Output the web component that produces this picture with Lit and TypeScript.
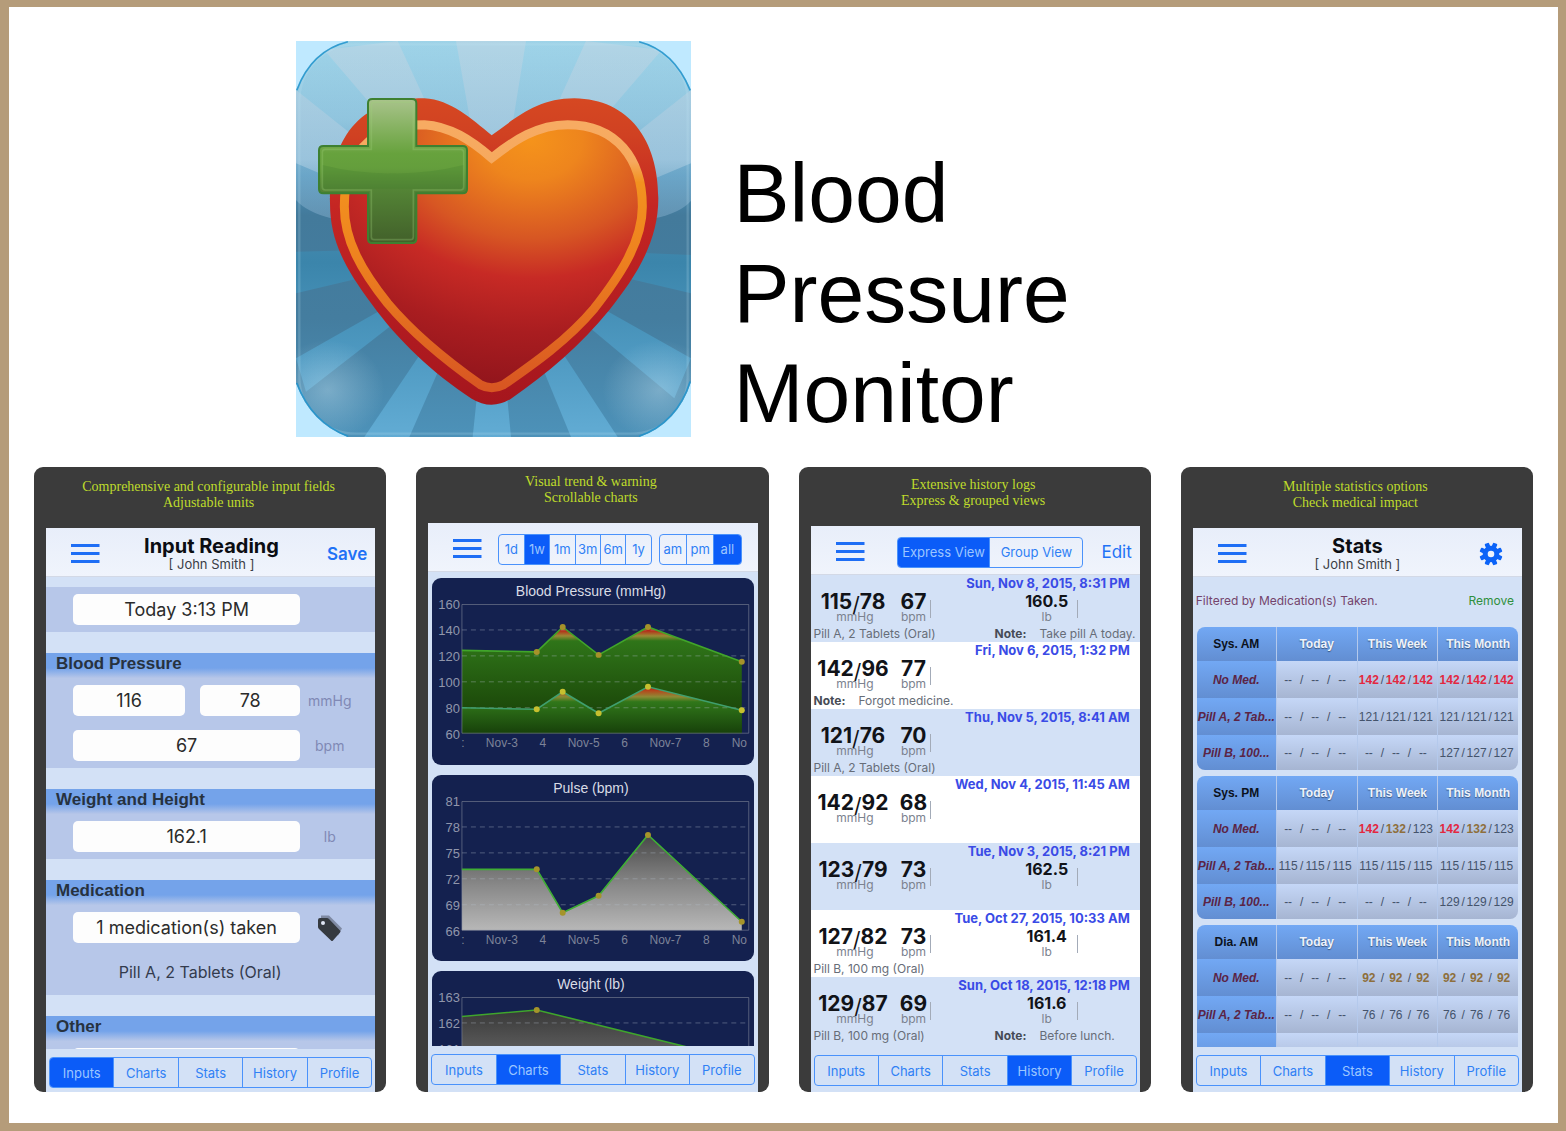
import { LitElement, html, svg, css, nothing } from "lit";
import { customElement, property } from "lit/decorators.js";
import { classMap } from "lit/directives/class-map.js";

const controls = css`
  * {
    box-sizing: border-box;
  }
  button {
    font: inherit;
    color: inherit;
    background: none;
    border: 0;
    padding: 0;
    margin: 0;
    cursor: pointer;
  }
`;

/* ---------- segmented control ---------- */

@customElement("segment-bar")
export class SegmentBar extends LitElement {
  @property({ attribute: false }) items: string[] = [];
  @property() selected = "";

  static styles = [
    controls,
    css`
      :host {
        display: block;
      }
      .bar {
        display: flex;
        height: 31px;
        border: 1px solid #4a92fb;
        border-radius: 4px;
        overflow: hidden;
        color: #2f80f5;
      }
      .item {
        flex: 1 1 0;
        min-width: 0;
        text-align: center;
        white-space: nowrap;
      }
      .item + .item {
        border-left: 1px solid #4a92fb;
      }
      .item.on {
        background: #0b5cf8;
        color: #9cc6ff;
      }
    `,
  ];

  render() {
    return html`<div class="bar" role="group">
      ${this.items.map(
        (item) => html`<button
          class=${classMap({ item: true, on: item === this.selected })}
          aria-pressed=${item === this.selected ? "true" : "false"}
        >
          ${item}
        </button>`,
      )}
    </div>`;
  }
}

/* ---------- phone frame ---------- */

@customElement("phone-frame")
export class PhoneFrame extends LitElement {
  @property({ attribute: false }) caption: string[] = [];
  @property() tab = "";

  static styles = [
    controls,
    css`
      :host {
        display: flex;
        flex-direction: column;
        min-width: 0;
        aspect-ratio: 352 / 625;
        padding: 0 11px 0 12px;
        border-radius: 9px;
        background: #3b3b3b;
        overflow: hidden;
      }
      .caption {
        margin: 0;
        padding: var(--caption-top, 12px) 4px 17px 0;
        font: 14px/16px "Liberation Serif", serif;
        color: #bfdc2b;
        text-align: center;
      }
      .line {
        display: block;
      }
      .screen {
        flex: 1;
        min-height: 0;
        display: flex;
        flex-direction: column;
        background: #d3e1f6;
      }
      .bar {
        flex: none;
        display: flex;
        align-items: center;
        height: 49px;
        padding: 4px 8px 0 25px;
        background: linear-gradient(#e8eefa, #f0f4fc);
        border-bottom: 1px solid #d3d9e6;
      }
      .menu {
        flex: none;
        width: 29px;
        height: 24px;
      }
      .menu svg {
        display: block;
      }
      .body {
        flex: 1;
        min-height: 0;
        overflow: hidden;
      }
      .tabs {
        flex: none;
        padding: 8px 3px var(--tabs-bottom, 6px);
        font-size: 13px;
      }
    `,
  ];

  render() {
    return html`
      <p class="caption">${this.caption.map((l) => html`<span class="line">${l}</span>`)}</p>
      <div class="screen">
        <header class="bar">
          <button class="menu" aria-label="Menu">
            <svg width="29" height="24" viewBox="0 0 29 24">
              <path d="M0 3.500h28.500M0 11.500h28.500M0 19.500h28.500" stroke="#1e6ef5" stroke-width="3.200" />
            </svg>
          </button>
          <slot name="bar"></slot>
        </header>
        <div class="body"><slot></slot></div>
        <nav class="tabs">
          <segment-bar
            .items=${["Inputs", "Charts", "Stats", "History", "Profile"]}
            selected=${this.tab}
          ></segment-bar>
        </nav>
      </div>
    `;
  }
}

/* ---------- app icon ---------- */

const RAYS = [
  "525,33 735,33",
  "130,60 350,33",
  "915,33 1142,60",
  "45,180 45,400",
  "1230,180 1230,400",
  "45,665 45,790",
  "1230,675 1230,790",
  "45,985 75,1085",
  "1230,985 1180,1105",
  "250,1221 385,1221",
  "870,1221 1010,1221",
  "575,1221 690,1221",
];

const HEART =
  "M632 316C700 268 765 205 880 205C1045 208 1132 330 1132 505C1132 640 1060 745 985 840C900 945 800 1030 690 1106Q632 1142 572 1106C455 1030 350 930 272 822C190 712 147 630 147 520C147 330 230 205 430 205C510 210 570 265 632 316Z";
const HEART_LINE =
  "M632 384C700 330 770 284 860 284C1005 284 1084 385 1084 530C1084 640 1010 745 940 835C860 930 760 1000 668 1064Q632 1082 598 1064C500 995 400 915 320 820C240 720 190 630 190 530C190 380 260 284 430 284C505 288 570 330 632 384Z";
const CROSS =
  "M274 207H393Q406 207 406 220V348H545Q558 348 558 361V477Q558 490 545 490H406V626Q406 639 393 639H274Q261 639 261 626V490H127Q114 490 114 477V361Q114 348 127 348H261V220Q261 207 274 207Z";
const CROSS_INNER =
  "M280 217H388Q397 217 397 226V358H539Q548 358 548 367V471Q548 480 539 480H397V620Q397 629 388 629H280Q271 629 271 620V480H133Q124 480 124 471V367Q124 358 133 358H271V226Q271 217 280 217Z";

@customElement("app-icon")
export class AppIcon extends LitElement {
  static styles = css`
    :host {
      display: block;
      background: #bfe9ff;
    }
    svg {
      display: block;
      width: 100%;
    }
  `;

  render() {
    return html`<svg viewBox="45 33 1185 1188" role="img" aria-label="Blood Pressure Monitor">
      <defs>
        <clipPath id="tile">
          <path
            d="M200 33H1075Q1180 60 1230 180V1055Q1190 1180 1075 1221H200Q90 1180 45 1060V180Q90 60 200 33Z"
          />
        </clipPath>
        <linearGradient id="sky" gradientUnits="userSpaceOnUse" x1="0" y1="33" x2="0" y2="1221">
          <stop offset="0" stop-color="#8ccbe4" />
          <stop offset=".2" stop-color="#7bbad7" />
          <stop offset=".34" stop-color="#4c92b9" />
          <stop offset=".44" stop-color="#437a9b" />
          <stop offset=".7" stop-color="#447d9f" />
          <stop offset="1" stop-color="#4d92b9" />
        </linearGradient>
        <linearGradient id="ray" gradientUnits="userSpaceOnUse" x1="0" y1="33" x2="0" y2="1221">
          <stop offset="0" stop-color="#a3cde1" />
          <stop offset=".3" stop-color="#8ab9d4" />
          <stop offset=".42" stop-color="#4c8bae" />
          <stop offset=".56" stop-color="#3b85ab" />
          <stop offset=".8" stop-color="#4f9ac2" />
          <stop offset="1" stop-color="#62acd4" />
        </linearGradient>
        <linearGradient id="gloss" x1="0" y1="0" x2="0" y2="1">
          <stop offset="0" stop-color="#fff" stop-opacity=".16" />
          <stop offset="1" stop-color="#a9cfee" stop-opacity=".3" />
        </linearGradient>
        <radialGradient id="glow">
          <stop offset="0" stop-color="#d5ecf7" stop-opacity=".35" />
          <stop offset="1" stop-color="#d5ecf7" stop-opacity="0" />
        </radialGradient>
        <linearGradient id="rim" x1="0" y1="0" x2="0" y2="1">
          <stop offset="0" stop-color="#d64822" />
          <stop offset=".12" stop-color="#d04122" />
          <stop offset=".35" stop-color="#c52623" />
          <stop offset=".8" stop-color="#ae1a20" />
          <stop offset="1" stop-color="#a5161d" />
        </linearGradient>
        <linearGradient id="line" x1="0" y1="0" x2="0" y2="1">
          <stop offset="0" stop-color="#f7ab62" />
          <stop offset=".14" stop-color="#f6a95e" />
          <stop offset=".22" stop-color="#f2921f" />
          <stop offset=".5" stop-color="#ee821f" />
          <stop offset="1" stop-color="#d85622" />
        </linearGradient>
        <radialGradient
          id="fill"
          gradientUnits="userSpaceOnUse"
          cx="0"
          cy="0"
          r="1"
          gradientTransform="translate(750 330) scale(960 740)"
        >
          <stop offset="0" stop-color="#f5931b" />
          <stop offset=".16" stop-color="#ee851d" />
          <stop offset=".4" stop-color="#d75623" />
          <stop offset=".56" stop-color="#c72a25" />
          <stop offset=".78" stop-color="#a91d20" />
          <stop offset="1" stop-color="#92151c" />
        </radialGradient>
        <linearGradient id="green" x1="0" y1="0" x2="0" y2="1">
          <stop offset="0" stop-color="#a9c38c" />
          <stop offset=".2" stop-color="#86b261" />
          <stop offset=".38" stop-color="#67a23d" />
          <stop offset=".48" stop-color="#649e3c" />
          <stop offset=".62" stop-color="#548536" />
          <stop offset="1" stop-color="#42602a" />
        </linearGradient>
      </defs>
      <g clip-path="url(#tile)">
        <rect x="45" y="33" width="1185" height="1188" fill="url(#sky)" />
        ${RAYS.map((r) => svg`<polygon points="${r} 635,650" fill="url(#ray)" />`)}
        <path d="M45 33H1230V512Q1200 548 1120 565Q900 610 632 610Q370 610 150 565Q75 545 45 510Z" fill="url(#gloss)" />
        <ellipse cx="140" cy="1080" rx="170" ry="150" fill="url(#glow)" />
        <ellipse cx="1135" cy="1080" rx="170" ry="150" fill="url(#glow)" />
        <rect x="55" y="43" width="1165" height="1168" rx="170" fill="none" stroke="#c4e6f5" stroke-opacity=".2" stroke-width="7" />
        <path
          d="M200 33Q90 60 45 180M1075 33Q1180 60 1230 180M1230 1055Q1190 1180 1075 1221M200 1221Q90 1180 45 1060"
          fill="none"
          stroke="#1f93cc"
          stroke-opacity=".85"
          stroke-width="10"
        />
      </g>
      <path d=${HEART} fill="url(#rim)" />
      <path d=${HEART_LINE} fill="url(#fill)" stroke="url(#line)" stroke-width="27" />
      <path d=${CROSS} fill="url(#green)" stroke="#3e8031" stroke-width="6" />
      <path d="M124 405Q230 432 335 430Q440 432 548 405V476H124Z" fill="#3f7a2c" fill-opacity=".25" />
      <path d=${CROSS_INNER} fill="none" stroke="#9fd07a" stroke-opacity=".3" stroke-width="5" />
    </svg>`;
  }
}

/* ---------- charts ---------- */

type Pt = [number, number];
interface Series {
  points: Pt[];
  stroke: string;
  dot: string;
  stops: [number, string][];
}

@customElement("trend-chart")
export class TrendChart extends LitElement {
  @property() heading = "";
  @property({ attribute: false }) ticks: number[] = [];
  @property({ attribute: false }) series: Series[] = [];

  static styles = css`
    :host {
      display: block;
      border-radius: 9px;
      background: #14214f;
      overflow: hidden;
    }
    .heading {
      margin: 0;
      padding-right: 4px;
      font: 14px/26px "Liberation Sans", sans-serif;
      color: #d9dce6;
      text-align: center;
    }
    svg {
      display: block;
      width: 100%;
      overflow: visible;
      font: 12px "Liberation Sans", sans-serif;
    }
    .tick {
      fill: #9096ab;
      text-anchor: end;
      font-size: 13px;
    }
    .day {
      fill: #7d8398;
      text-anchor: middle;
    }
  `;

  render() {
    const days: [number, string][] = [
      [31, ":"],
      [70, "Nov-3"],
      [111, "4"],
      [152, "Nov-5"],
      [193, "6"],
      [234, "Nov-7"],
      [275, "8"],
      [308, "No"],
    ];
    const band = (s: Series) => {
      const p = s.points;
      return `${p.map((q) => q.join(",")).join(" ")} ${p[p.length - 1][0]},155.5 30,155.5`;
    };
    return html`
      <h3 class="heading">${this.heading}</h3>
      <svg viewBox="0 26 322 161">
        <defs>
          ${this.series.map(
            (s, i) => svg`<linearGradient id="g${i}" gradientUnits="userSpaceOnUse" x1="0" y1="0" x2="0" y2="156">
              ${s.stops.map(([y, c]) => svg`<stop offset=${y / 156} stop-color=${c} />`)}
            </linearGradient>`,
          )}
        </defs>
        ${this.series.map((s, i) => svg`<polygon points=${band(s)} fill="url(#g${i})" />`)}
        ${[52, 78, 104, 130].map(
          (y) => svg`<path d="M30 ${y}H317" stroke="#b4becd" stroke-opacity=".38" stroke-dasharray="5 4" />`,
        )}
        <path d="M30 26.500H317.500V155.500H30Z" fill="none" stroke="#8a90a0" stroke-opacity=".55" />
        ${this.series.map(
          (s) => svg`<polyline points=${s.points.map((q) => q.join(",")).join(" ")} fill="none" stroke=${s.stroke} stroke-width="1.600" />
            ${s.points.slice(1).map(([x, y]) => svg`<circle cx=${x} cy=${y} r="3" fill=${s.dot} />`)}`,
        )}
        ${this.ticks.map((t, i) => svg`<text class="tick" x="28" y=${31 + i * 26}>${t}</text>`)}
        ${this.ticks.length > 3 ? days.map(([x, d]) => svg`<text class="day" x=${x} y="169">${d}</text>`) : nothing}
      </svg>
    `;
  }
}

const XS = [30, 105, 131, 167, 216.5, 310.5];
const zip = (ys: number[]): Pt[] => ys.map((y, i) => [XS[i], y]);

const CHARTS: { heading: string; ticks: number[]; series: Series[] }[] = [
  {
    heading: "Blood Pressure (mmHg)",
    ticks: [160, 140, 120, 100, 80, 60],
    series: [
      {
        points: zip([72.5, 74, 49, 77, 49, 84]),
        stroke: "#41a52a",
        dot: "#a5922a",
        stops: [
          [49, "#b80f0f"],
          [53, "#b43018"],
          [58, "#9a8a35"],
          [63, "#2f7519"],
          [120, "#1f500c"],
          [156, "#173b08"],
        ],
      },
      {
        points: zip([130, 131.5, 114, 135.5, 109, 132.5]),
        stroke: "#3f9f6e",
        dot: "#c6c02f",
        stops: [
          [109, "#c01212"],
          [113, "#b5481c"],
          [119, "#8d8a35"],
          [124, "#30771a"],
          [156, "#17400a"],
        ],
      },
    ],
  },
  {
    heading: "Pulse (bpm)",
    ticks: [81, 78, 75, 72, 69, 66],
    series: [
      {
        points: zip([94.5, 94.5, 138, 121, 60, 147]),
        stroke: "#3fae34",
        dot: "#a5942a",
        stops: [
          [60, "#484848"],
          [110, "#888"],
          [156, "#b8b8b8"],
        ],
      },
    ],
  },
  {
    heading: "Weight (lb)",
    ticks: [163, 162, 161],
    series: [
      {
        points: [
          [30, 45.5],
          [105, 39],
          [310, 89.5],
        ],
        stroke: "#3fa52c",
        dot: "#a5942a",
        stops: [
          [39, "#383838"],
          [156, "#a0a0a0"],
        ],
      },
    ],
  },
];

/* ---------- history log ---------- */

interface Entry {
  date: string;
  sys: number;
  dia: number;
  pulse: number;
  weight?: string;
  pill?: string;
  note?: string;
}

const LOG: Entry[] = [
  { date: "Sun, Nov 8, 2015, 8:31 PM", sys: 115, dia: 78, pulse: 67, weight: "160.5", pill: "Pill A, 2 Tablets (Oral)", note: "Take pill A today." },
  { date: "Fri, Nov 6, 2015, 1:32 PM", sys: 142, dia: 96, pulse: 77, note: "Forgot medicine." },
  { date: "Thu, Nov 5, 2015, 8:41 AM", sys: 121, dia: 76, pulse: 70, pill: "Pill A, 2 Tablets (Oral)" },
  { date: "Wed, Nov 4, 2015, 11:45 AM", sys: 142, dia: 92, pulse: 68 },
  { date: "Tue, Nov 3, 2015, 8:21 PM", sys: 123, dia: 79, pulse: 73, weight: "162.5" },
  { date: "Tue, Oct 27, 2015, 10:33 AM", sys: 127, dia: 82, pulse: 73, weight: "161.4", pill: "Pill B, 100 mg (Oral)" },
  { date: "Sun, Oct 18, 2015, 12:18 PM", sys: 129, dia: 87, pulse: 69, weight: "161.6", pill: "Pill B, 100 mg (Oral)", note: "Before lunch." },
];

/* ---------- statistics ---------- */

const NONE = "--/--/--";
const STATS: { name: string; rows: [string, string, string, string][] }[] = [
  {
    name: "Sys. AM",
    rows: [
      ["No Med.", NONE, "142/142/142", "142/142/142"],
      ["Pill A, 2 Tab...", NONE, "121/121/121", "121/121/121"],
      ["Pill B, 100...", NONE, NONE, "127/127/127"],
    ],
  },
  {
    name: "Sys. PM",
    rows: [
      ["No Med.", NONE, "142/132/123", "142/132/123"],
      ["Pill A, 2 Tab...", "115/115/115", "115/115/115", "115/115/115"],
      ["Pill B, 100...", NONE, NONE, "129/129/129"],
    ],
  },
  {
    name: "Dia. AM",
    rows: [
      ["No Med.", NONE, "92/92/92", "92/92/92"],
      ["Pill A, 2 Tab...", NONE, "76/76/76", "76/76/76"],
      ["", "", "", ""],
    ],
  },
];

const level = (v: string) => (v === "142" ? "high" : v === "132" || v === "92" ? "warn" : "");

@customElement("app-root")
export class AppRoot extends LitElement {
  static styles = [
    controls,
    css`
      :host {
        display: block;
        font-family: Inter, "Liberation Sans", sans-serif;
      }
      .page {
        min-height: 100vh;
        border: solid #b59c7a;
        border-width: 7px 8px 8px 9px;
        background: #fff;
      }
      .hero {
        display: flex;
        align-items: flex-end;
        gap: 43px;
        padding: 34px 0 0 18.5%;
      }
      .icon {
        width: 395px;
      }
      .title {
        margin: 0 0 -6px;
        width: min-content;
        font: 84px/100px "Liberation Sans", sans-serif;
        color: #000;
      }
      .shots {
        display: grid;
        grid-template-columns: repeat(4, minmax(0, 1fr));
        gap: 30px;
        padding: 30px 25px 31px;
      }
      .inputs {
        --tabs-bottom: 4px;
      }
      .charts {
        --caption-top: 7px;
        --tabs-bottom: 7px;
      }
      .history {
        --caption-top: 10px;
      }

      /* header bar contents */
      .heading {
        flex: 1;
        margin-left: -4px;
        text-align: center;
        color: #0b0d12;
      }
      .name {
        margin: 0;
        font-size: 20px;
        line-height: 20px;
        font-weight: 700;
      }
      .user {
        margin: 0;
        font-size: 13px;
        line-height: 17px;
        color: #3a3d45;
      }
      .side {
        min-width: 29px;
        color: #1f72f6;
      }
      .save {
        font-size: 17px;
        font-weight: 600;
      }
      .gear {
        width: 38px;
        margin-right: 4px;
        display: flex;
        justify-content: center;
      }
      .edit {
        font-size: 17px;
        margin-left: 18px;
      }
      .ranges {
        flex: 154;
        margin-left: 16px;
        font-size: 13px;
      }
      .times {
        flex: 83;
        margin: 0 8px 0 7px;
        font-size: 13px;
      }
      .views {
        flex: 1;
        margin-left: 32px;
        font-size: 13px;
      }

      /* input form */
      .form {
        padding-top: 10px;
      }
      .group {
        margin: 0 0 21px;
      }
      .legend {
        margin: 0;
        padding-left: 10px;
        font: 700 17px/21px "Liberation Sans", sans-serif;
        height: 25px;
        color: #27323f;
        background: linear-gradient(#74a3ea 60%, #b6c6e8);
      }
      .fields {
        display: grid;
        gap: 14px;
        padding: 7px 16px 7px 27px;
        background: #b7c7e9;
      }
      .row {
        display: grid;
        grid-template-columns: minmax(0, 1fr) 59px;
        align-items: center;
      }
      .pair {
        display: grid;
        grid-template-columns: 112fr 100fr;
        gap: 15px;
      }
      .field {
        width: 100%;
        height: 31px;
        border: 0;
        border-radius: 5px;
        background: #fdfdfd;
        font: 18px Inter, sans-serif;
        color: #2b2b2b;
        text-align: center;
        padding: 0;
      }
      .unit {
        text-align: center;
        font-size: 14px;
        color: #8089b5;
      }
      .tag {
        display: flex;
        justify-content: center;
      }
      .pill {
        margin: 0;
        padding-right: 32px;
        font-size: 16px;
        line-height: 31px;
        color: #333b4d;
        text-align: center;
      }

      /* charts */
      .chart-list {
        display: grid;
        gap: 10px;
        padding: 6px 4px 0;
      }

      /* history */
      .log {
        margin: 0;
        padding: 0;
        list-style: none;
        background: #fff;
      }
      .entry {
        height: 67px;
        background: #fff;
        color: #111318;
      }
      .entry:nth-child(odd) {
        background: #d3e1f6;
      }
      .date {
        display: block;
        padding-right: 10px;
        font-size: 13px;
        line-height: 17px;
        font-weight: 700;
        color: #3a4be6;
        text-align: right;
      }
      .metrics {
        display: flex;
        height: 34px;
      }
      .metric {
        display: flex;
        flex-direction: column;
        align-items: center;
      }
      .bp {
        width: 81px;
        padding-left: 4px;
      }
      .bp .small {
        padding-left: 4px;
      }
      .pulse {
        width: 38px;
        padding-left: 6px;
      }
      .weight {
        width: 60px;
        margin: 0 0 0 auto;
      }
      .weight-rule {
        margin-right: 62px;
      }
      .big {
        font-size: 21px;
        line-height: 19px;
        font-weight: 700;
      }
      .mid {
        font-size: 16px;
        line-height: 19px;
        font-weight: 700;
      }
      .slash {
        font-weight: 400;
        line-height: 0;
        vertical-align: -3px;
      }
      .small {
        font-size: 12px;
        line-height: 12px;
        color: #7b828f;
      }
      .rule {
        border-right: 1px solid #a3abb8;
        height: 18px;
        align-self: center;
      }
      .memo {
        display: flex;
        padding: 0 3px;
        font-size: 12px;
        line-height: 16px;
        color: #676d78;
        white-space: nowrap;
      }
      .memo-pill {
        flex: 0 0 181px;
      }
      .memo-label {
        flex: 0 0 45px;
        color: #464b55;
      }

      /* stats */
      .filter {
        display: flex;
        justify-content: space-between;
        padding: 15px 8px 18px 3px;
        font-size: 12px;
        line-height: 17px;
        color: #74446c;
      }
      .remove {
        color: #2f8f3c;
      }
      .tables {
        display: grid;
        gap: 6px;
        padding: 0 4px;
      }
      .table {
        width: 100%;
        table-layout: fixed;
        border-collapse: separate;
        border-spacing: 0;
        border-radius: 8px;
        overflow: hidden;
        font: 12px "Liberation Sans", sans-serif;
        color: #44536b;
      }
      .table th,
      .table td {
        padding: 0;
        text-align: center;
        white-space: nowrap;
        height: 37px;
      }
      .table .top {
        height: 34px;
        background: linear-gradient(#72a8f4, #628ed2);
        color: #eef3fb;
        text-shadow: 0 1px 1px #3a567f;
      }
      .table .corner {
        width: 79px;
        color: #0c121c;
        text-shadow: none;
      }
      .table .med {
        background: linear-gradient(#72a8f4, #628ed2);
        color: #5b2445;
        font-style: italic;
      }
      .table .top + .top,
      .table td {
        border-left: 1px solid #b4c9ec;
      }
      .table td {
        padding-right: 3px;
        background: linear-gradient(#c5d7f7, #a6b5d2);
      }
      .table tr:last-child .med,
      .table tr:last-child td {
        height: 35px;
      }
      .triple {
        display: inline-grid;
        grid-template-columns: 20px 7px 20px 7px 20px;
        justify-items: center;
      }
      .high {
        color: #e3273f;
        font-weight: 700;
      }
      .warn {
        color: #8e6f3c;
        font-weight: 700;
      }
    `,
  ];

  private inputs() {
    return html`<phone-frame
      class="inputs"
      .caption=${["Comprehensive and configurable input fields", "Adjustable units"]}
      tab="Inputs"
    >
      <div slot="bar" class="heading">
        <h2 class="name">Input Reading</h2>
        <p class="user">[ John Smith ]</p>
      </div>
      <button slot="bar" class="side save">Save</button>
      <form class="form">
        <section class="group">
          <div class="fields">
            <div class="row"><input class="field" aria-label="Time" value="Today 3:13 PM" /></div>
          </div>
        </section>
        <section class="group">
          <h3 class="legend">Blood Pressure</h3>
          <div class="fields">
            <div class="row">
              <div class="pair">
                <input id="sys" class="field" aria-label="Systolic" value="116" />
                <input class="field" aria-label="Diastolic" value="78" />
              </div>
              <label class="unit" for="sys">mmHg</label>
            </div>
            <div class="row">
              <input id="bpm" class="field" value="67" />
              <label class="unit" for="bpm">bpm</label>
            </div>
          </div>
        </section>
        <section class="group">
          <h3 class="legend">Weight and Height</h3>
          <div class="fields">
            <div class="row">
              <input id="lb" class="field" value="162.1" />
              <label class="unit" for="lb">lb</label>
            </div>
          </div>
        </section>
        <section class="group">
          <h3 class="legend">Medication</h3>
          <div class="fields">
            <div class="row">
              <input class="field" aria-label="Medication" value="1 medication(s) taken" />
              <button type="button" class="tag" aria-label="Tags">
                <svg width="26" height="28" viewBox="0 0 26 28">
                  <path d="M4 1.500h8L25 14.500l-4 7L4 9Z" fill="#7f8aa3" />
                  <path d="M1 6q0-2 2-2h7q1 0 2 1l11 11.500q1 1 0 2l-7 8q-1 1-2 0L2 15q-1-1-1-2Z" fill="#353a40" />
                  <circle cx="6" cy="9" r="2" fill="#dfe6f4" />
                </svg>
              </button>
            </div>
            <p class="pill">Pill A, 2 Tablets (Oral)</p>
          </div>
        </section>
        <section class="group">
          <h3 class="legend">Other</h3>
          <div class="fields">
            <div class="row"><input class="field" aria-label="Other" /></div>
          </div>
        </section>
      </form>
    </phone-frame>`;
  }

  private charts() {
    return html`<phone-frame
      class="charts"
      .caption=${["Visual trend & warning", "Scrollable charts"]}
      tab="Charts"
    >
      <segment-bar slot="bar" class="ranges" .items=${["1d", "1w", "1m", "3m", "6m", "1y"]} selected="1w"></segment-bar>
      <segment-bar slot="bar" class="times" .items=${["am", "pm", "all"]} selected="all"></segment-bar>
      <div class="chart-list">
        ${CHARTS.map(
          (c) => html`<trend-chart heading=${c.heading} .ticks=${c.ticks} .series=${c.series}></trend-chart>`,
        )}
      </div>
    </phone-frame>`;
  }

  private entry(e: Entry) {
    return html`<li class="entry">
      <time class="date">${e.date}</time>
      <div class="metrics">
        <div class="metric bp">
          <span class="big">${e.sys}<span class="slash">/</span>${e.dia}</span>
          <span class="small">mmHg</span>
        </div>
        <div class="metric pulse">
          <span class="big">${e.pulse}</span>
          <span class="small">bpm</span>
        </div>
        <span class="rule"></span>
        ${e.weight
          ? html`<div class="metric weight">
                <span class="mid">${e.weight}</span>
                <span class="small">lb</span>
              </div>
              <span class="rule weight-rule"></span>`
          : nothing}
      </div>
      <div class="memo">
        ${e.pill ? html`<span class="memo-pill">${e.pill}</span>` : nothing}
        ${e.note ? html`<b class="memo-label">Note:</b><span>${e.note}</span>` : nothing}
      </div>
    </li>`;
  }

  private history() {
    return html`<phone-frame
      class="history"
      .caption=${["Extensive history logs", "Express & grouped views"]}
      tab="History"
    >
      <segment-bar slot="bar" class="views" .items=${["Express View", "Group View"]} selected="Express View"></segment-bar>
      <button slot="bar" class="side edit">Edit</button>
      <ul class="log">
        ${LOG.map((e) => this.entry(e))}
      </ul>
    </phone-frame>`;
  }

  private reading(text: string) {
    if (!text) return nothing;
    return html`<span class="triple"
      >${text.split(/(\/)/).map((p) => html`<span class=${level(p)}>${p}</span>`)}</span
    >`;
  }

  private stats() {
    const teeth = [0, 45, 90, 135, 180, 225, 270, 315];
    return html`<phone-frame
      class="stats"
      .caption=${["Multiple statistics options", "Check medical impact"]}
      tab="Stats"
    >
      <div slot="bar" class="heading">
        <h2 class="name">Stats</h2>
        <p class="user">[ John Smith ]</p>
      </div>
      <button slot="bar" class="side gear" aria-label="Settings">
        <svg width="24" height="24" viewBox="-12 -12 24 24">
          ${teeth.map(
            (a) => svg`<rect x="-2.300" y="-11.500" width="4.600" height="6" rx="1" fill="#0b63f8" transform="rotate(${a + 22.5})" />`,
          )}
          <circle r="5.800" fill="none" stroke="#0b63f8" stroke-width="5" />
        </svg>
      </button>
      <div class="filter"><span>Filtered by Medication(s) Taken.</span><button class="remove">Remove</button></div>
      <div class="tables">
        ${STATS.map(
          (t) => html`<table class="table">
            <thead>
              <tr>
                <th class="top corner" scope="col">${t.name}</th>
                <th class="top" scope="col">Today</th>
                <th class="top" scope="col">This Week</th>
                <th class="top" scope="col">This Month</th>
              </tr>
            </thead>
            <tbody>
              ${t.rows.map(
                ([med, ...cells]) => html`<tr>
                  <th class="med" scope="row">${med}</th>
                  ${cells.map((c) => html`<td>${this.reading(c)}</td>`)}
                </tr>`,
              )}
            </tbody>
          </table>`,
        )}
      </div>
    </phone-frame>`;
  }

  render() {
    return html`<main class="page">
      <header class="hero">
        <app-icon class="icon"></app-icon>
        <h1 class="title">Blood Pressure Monitor</h1>
      </header>
      <section class="shots">
        ${this.inputs()} ${this.charts()} ${this.history()} ${this.stats()}
      </section>
    </main>`;
  }
}
